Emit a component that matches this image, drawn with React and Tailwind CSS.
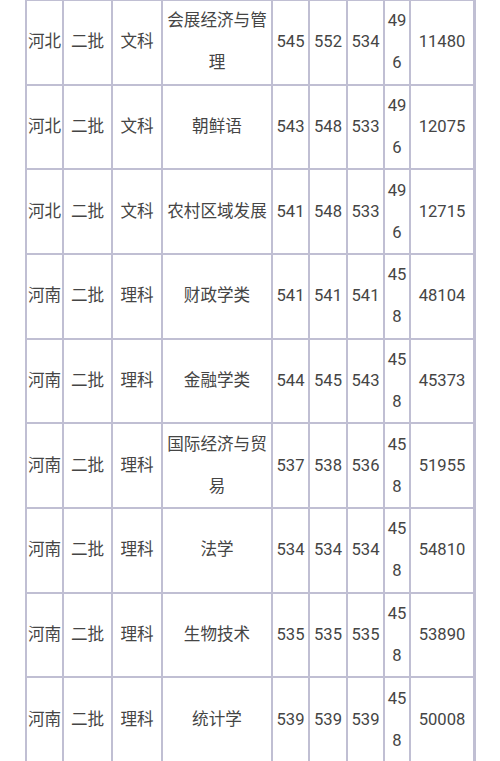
import React from "react";

const rows = [
  ["河北", "二批", "文科", "会展经济与管理", "545", "552", "534", "496", "11480"],
  ["河北", "二批", "文科", "朝鲜语", "543", "548", "533", "496", "12075"],
  ["河北", "二批", "文科", "农村区域发展", "541", "548", "533", "496", "12715"],
  ["河南", "二批", "理科", "财政学类", "541", "541", "541", "458", "48104"],
  ["河南", "二批", "理科", "金融学类", "544", "545", "543", "458", "45373"],
  ["河南", "二批", "理科", "国际经济与贸易", "537", "538", "536", "458", "51955"],
  ["河南", "二批", "理科", "法学", "534", "534", "534", "458", "54810"],
  ["河南", "二批", "理科", "生物技术", "535", "535", "535", "458", "53890"],
  ["河南", "二批", "理科", "统计学", "539", "539", "539", "458", "50008"],
];

export default function App() {
  return (
    <div className="w-[500px] h-[761px] overflow-hidden bg-white">
      <div
        className="ml-[25px] -mt-[1px] w-[451px] grid grid-cols-[35px_47px_48px_108px_35px_36px_35px_24px_62px] auto-rows-[82.67px] gap-[2px] p-[2px] bg-[#c0bfd3] text-[#454545] text-[16.6px] leading-[42px]"
        style={{ fontFamily: '"Roboto", "Noto Sans CJK SC", sans-serif' }}
      >
        {rows.map((r, i) =>
          r.map((c, j) => (
            <div
              key={i + "-" + j}
              className="bg-white flex items-center justify-center text-center break-all"
            >
              <span className="block">{c}</span>
            </div>
          ))
        )}
      </div>
    </div>
  );
}
